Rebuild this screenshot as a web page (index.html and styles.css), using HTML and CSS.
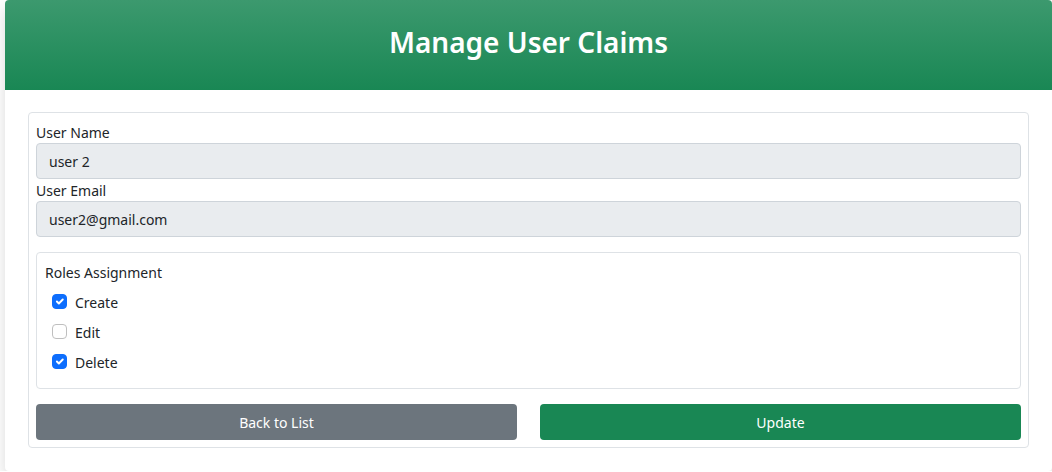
FILE: index.html
```html
<!DOCTYPE html>
<html lang="en">
<head>
  <meta charset="utf-8">
  <meta name="viewport" content="width=device-width, initial-scale=1">
  <title>Manage User Claims</title>
  <link rel="stylesheet" href="styles.css">
</head>
<body>
  <main class="card">
    <header class="card-header">
      <h1 class="card-title">Manage User Claims</h1>
    </header>
    <div class="card-body">
      <form class="panel">
        <label class="label" for="user-name">User Name</label>
        <input class="field" id="user-name" type="text" value="user 2" readonly>
        <label class="label" for="user-email">User Email</label>
        <input class="field" id="user-email" type="email" value="user2@gmail.com" readonly>
        <fieldset class="roles" aria-labelledby="roles-title">
          <div class="label" id="roles-title">Roles Assignment</div>
          <div class="options">
            <div class="option">
              <input class="check" type="checkbox" id="create" checked>
              <label for="create">Create</label>
            </div>
            <div class="option">
              <input class="check" type="checkbox" id="edit">
              <label for="edit">Edit</label>
            </div>
            <div class="option">
              <input class="check" type="checkbox" id="delete" checked>
              <label for="delete">Delete</label>
            </div>
          </div>
        </fieldset>
        <div class="actions">
          <a class="button button-secondary" href="#">Back to List</a>
          <button class="button button-primary" type="submit">Update</button>
        </div>
      </form>
    </div>
  </main>
</body>
</html>
```
FILE: styles.css
```css
* {
  box-sizing: border-box;
}

body {
  margin: 0;
  padding-left: 5px;
  background: #fff;
  color: #212529;
  font-family: "Segoe UI", "Noto Sans", "Open Sans", sans-serif;
  font-size: 14px;
  line-height: 20px;
}

.card {
  background: #fff;
  border-radius: 4px;
  box-shadow: 0 8px 16px rgba(0, 0, 0, 0.15);
}

.card-header {
  padding: 24px 16px 30px;
  border-radius: 4px 4px 0 0;
  background: linear-gradient(180deg, #3c996e, #198754);
  color: #fff;
  text-align: center;
}

.card-title {
  margin: 0;
  font-size: 28px;
  font-weight: 600;
  line-height: 36px;
}

.card-body {
  padding: 22px 23px 23px;
}

.panel {
  display: flex;
  flex-direction: column;
  padding: 8px 7px 7px;
  border: 1px solid #dee2e6;
  border-radius: 4px;
}

.label {
  display: block;
  padding-top: 2px;
}

.field {
  width: 100%;
  height: 36px;
  padding: 0 12px;
  border: 1px solid #ced4da;
  border-radius: 4px;
  background: #e9ecef;
  color: inherit;
  font: inherit;
}

.roles {
  min-width: 0;
  margin: 15px 0;
  padding: 8px 8px 11px;
  border: 1px solid #dee2e6;
  border-radius: 4px;
}

.options {
  padding: 4px 7px 0;
}

.option {
  display: flex;
  align-items: flex-start;
  gap: 8px;
  height: 30px;
  padding-top: 6px;
}

.check {
  width: 15px;
  height: 15px;
  margin: 1px 0 0;
  appearance: none;
  border: 1px solid #bfbfbf;
  border-radius: 4px;
  background: #fff center / contain no-repeat;
}

.check:checked {
  border-color: #0d6efd;
  background-color: #0d6efd;
  background-image: url("data:image/svg+xml,%3Csvg xmlns='http://www.w3.org/2000/svg' viewBox='0 0 20 20'%3E%3Cpath fill='none' stroke='%23fff' stroke-linecap='round' stroke-linejoin='round' stroke-width='3' d='m6 10 3 3 6-6'/%3E%3C/svg%3E");
}

.actions {
  display: grid;
  grid-template-columns: 1fr 1fr;
  gap: 23px;
}

.button {
  height: 36px;
  padding: 9px 12px 7px;
  border: 0;
  border-radius: 4px;
  color: #fff;
  font: inherit;
  text-align: center;
  text-decoration: none;
  cursor: pointer;
}

.button-secondary {
  background: #6c757d;
}

.button-primary {
  background: #198754;
}
```
